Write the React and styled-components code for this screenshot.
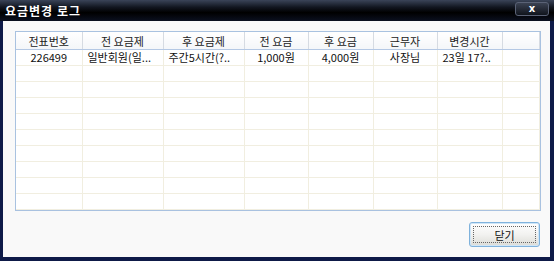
import React from "react";
import styled, { createGlobalStyle } from "styled-components";

const GlobalStyle = createGlobalStyle`
  html, body {
    margin: 0;
    padding: 0;
    background: #ffffff;
  }
  body {
    font-family: "Noto Sans CJK KR", "Noto Sans", sans-serif;
  }
`;

// 창 전체
const Window = styled.div`
  width: 554px;
  height: 261px;
  box-sizing: border-box;
  display: flex;
  flex-direction: column;
  background: #0e1a48;
  overflow: hidden;
`;

const TitleBar = styled.div`
  height: 21px;
  flex: none;
  display: flex;
  align-items: center;
  justify-content: space-between;
  padding: 0 5px 0 5px;
  background: linear-gradient(#3a4458 0%, #11151f 35%, #000000 60%, #0b1020 100%);
`;

const Title = styled.span`
  color: #ffffff;
  font-size: 12px;
  font-weight: bold;
  letter-spacing: 1px;
`;

const CloseButton = styled.div`
  width: 32px;
  height: 12px;
  margin-top: -3px;
  border: 1px solid #5a6276;
  border-radius: 3px;
  background: linear-gradient(#3b4252, #10141c);
  color: #ffffff;
  font-family: "DejaVu Sans", sans-serif;
  font-weight: bold;
  font-size: 10px;
  line-height: 11px;
  text-align: center;
`;

const Body = styled.div`
  flex: 1;
  margin: 0 4px 4px 3px;
  background: #f9f9f9;
  padding: 11px 12px 0 13px;
  display: flex;
  flex-direction: column;
`;

const Grid = styled.table`
  width: 523px;
  border-collapse: collapse;
  table-layout: fixed;
  background: #ffffff;
  outline: 1px solid #a9c2e0;
  font-size: 11px;
  color: #111111;
`;

const HeadCell = styled.th`
  height: 17px;
  padding: 0;
  font-weight: normal;
  color: #222222;
  text-align: center;
  border-right: 1px solid #d6dbe2;
  border-bottom: 1px solid #b4c8e4;
  background: linear-gradient(#ffffff, #f4f6f9);
  white-space: nowrap;
  overflow: hidden;
`;

const Cell = styled.td`
  height: 15px;
  padding: 0 0 0 ${(p) => (p.$align === "left" ? "5px" : "0")};
  text-align: ${(p) => p.$align || "center"};
  border-right: 1px solid #f1eee0;
  border-bottom: 1px solid #f1eee0;
  white-space: nowrap;
  overflow: hidden;
  line-height: 15px;
`;

const Footer = styled.div`
  display: flex;
  justify-content: flex-end;
  padding: 12px 0 0;
`;

const Button = styled.button`
  width: 71px;
  height: 25px;
  margin-right: -2px;
  border: 1px solid #7fb2dc;
  border-radius: 3px;
  background: linear-gradient(#ffffff 0%, #f2f2f0 50%, #dcdcd6 100%);
  box-shadow: inset 0 0 0 1px #cfe6f8;
  font-family: "Noto Sans CJK KR", sans-serif;
  font-size: 11px;
  color: #111111;
  padding: 0;
  position: relative;

  &::after {
    content: "";
    position: absolute;
    inset: 3px;
    border: 1px dotted #666666;
  }
`;

const columns = [
  { title: "전표번호", width: 66 },
  { title: "전 요금제", width: 81 },
  { title: "후 요금제", width: 81 },
  { title: "전 요금", width: 64 },
  { title: "후 요금", width: 65 },
  { title: "근무자", width: 64 },
  { title: "변경시간", width: 65 },
  { title: "", width: 37 },
];

const rows = [
  [
    { v: "226499" },
    { v: "일반회원(일...", a: "left" },
    { v: "주간5시간(?..", a: "left" },
    { v: "1,000원" },
    { v: "4,000원" },
    { v: "사장님" },
    { v: "23일 17?..", a: "left" },
    { v: "" },
  ],
];

const EMPTY_ROWS = 10;

const App = () => {
  const allRows = [...rows];
  while (allRows.length < EMPTY_ROWS) allRows.push(columns.map(() => ({ v: "" })));

  return (
    <>
      <GlobalStyle />
      <Window>
        <TitleBar>
          <Title>요금변경 로그</Title>
          <CloseButton>x</CloseButton>
        </TitleBar>
        <Body>
          <Grid>
            <colgroup>
              {columns.map((c, i) => (
                <col key={i} style={{ width: c.width }} />
              ))}
            </colgroup>
            <thead>
              <tr>
                {columns.map((c, i) => (
                  <HeadCell key={i}>{c.title}</HeadCell>
                ))}
              </tr>
            </thead>
            <tbody>
              {allRows.map((r, ri) => (
                <tr key={ri}>
                  {r.map((c, ci) => (
                    <Cell key={ci} $align={c.a}>
                      {c.v}
                    </Cell>
                  ))}
                </tr>
              ))}
            </tbody>
          </Grid>
          <Footer>
            <Button>닫기</Button>
          </Footer>
        </Body>
      </Window>
    </>
  );
};

export default App;
